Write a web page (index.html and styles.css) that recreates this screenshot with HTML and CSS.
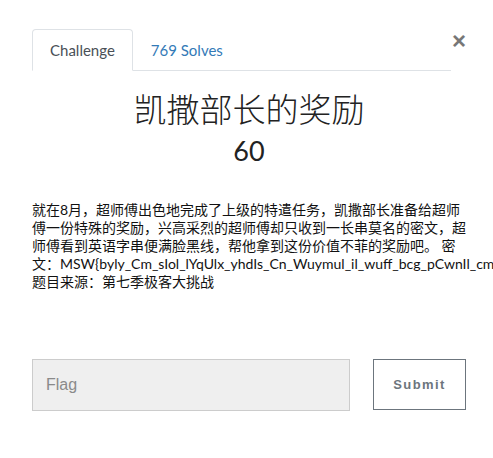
FILE: index.html
```html
<!DOCTYPE html>
<html lang="zh">
<head>
<meta charset="utf-8">
<link rel="stylesheet" href="styles.css">
</head>
<body>
<div class="modal">
  <div class="head">
    <ul class="tabs">
      <li class="tab active">Challenge</li>
      <li class="tab link">769 Solves</li>
    </ul>
    <button class="close" aria-label="Close">&times;</button>
  </div>
  <h2 class="title">凯撒部长的奖励</h2>
  <h3 class="value">60</h3>
  <div class="desc">就在8月，超师傅出色地完成了上级的特遣任务，凯撒部长准备给超师傅一份特殊的奖励，兴高采烈的超师傅却只收到一长串莫名的密文，超师傅看到英语字串便满脸黑线，帮他拿到这份价值不菲的奖励吧。 密<span class="cipher">文：MSW{byly_Cm_sIol_lYqUlx_yhdIs_Cn_Wuymul_il_wuff_bcg_pCwnIl_cm_u_Yrwyxu}</span><br>题目来源：第七季极客大挑战</div>
  <form class="flag-form">
    <input class="flag-input" type="text" placeholder="Flag">
    <button class="submit" type="button">Submit</button>
  </form>
</div>
</body>
</html>
```

FILE: styles.css
```css
html, body {
  margin: 0;
  padding: 0;
  background: #fff;
  overflow: hidden;
}
body {
  font-family: Lato, "Noto Sans CJK TC", sans-serif;
  color: #212529;
}
.modal {
  width: 434px;
  padding: 29px 0 0 32px;
}
.head {
  display: flex;
  align-items: flex-start;
}
.tabs {
  list-style: none;
  margin: 0;
  padding: 0;
  display: flex;
  width: 419px;
  border-bottom: 1px solid #dee2e6;
}
.tab {
  font-size: 15px;
  line-height: 20px;
  padding: 10px 17px;
  margin-bottom: -1px;
  border: 1px solid transparent;
  border-radius: 4px 4px 0 0;
}
.tab.active {
  color: #495057;
  border-color: #dee2e6 #dee2e6 #fff;
  background: #fff;
}
.tab.link {
  color: #337ab7;
}
.close {
  border: 0;
  background: none;
  padding: 0;
  margin: 2px 0 0 1px;
  font-family: "Liberation Sans", sans-serif;
  font-size: 24px;
  line-height: 20px;
  font-weight: 700;
  color: #777;
}
.title {
  margin: 14px 0 0;
  text-align: center;
  font-family: "Noto Sans CJK SC", sans-serif;
  font-weight: 300;
  font-size: 33px;
  line-height: 46px;
  color: #222;
}
.value {
  margin: 0;
  text-align: center;
  font-family: Lato, sans-serif;
  font-weight: 400;
  font-size: 27px;
  line-height: 40px;
  color: #222;
}
.desc {
  margin-top: 30px;
  font-size: 14px;
  line-height: 18px;
  color: #111;
}
.cipher {
  white-space: nowrap;
}
.flag-form {
  display: flex;
  gap: 23px;
  margin-top: 68px;
}
.flag-input {
  width: 318px;
  height: 52px;
  box-sizing: border-box;
  border: 1px solid #ccc;
  background: #efefef;
  padding: 0 13px;
  font-family: "Liberation Sans", sans-serif;
  font-size: 16px;
  color: #555;
}
.flag-input::placeholder {
  color: #8a8a8a;
}
.submit {
  width: 93px;
  height: 51px;
  box-sizing: border-box;
  border: 1px solid #6c757d;
  background: #fff;
  color: #6c757d;
  font-family: "Liberation Sans", sans-serif;
  font-weight: 700;
  font-size: 13px;
  letter-spacing: 1.4px;
}
```
